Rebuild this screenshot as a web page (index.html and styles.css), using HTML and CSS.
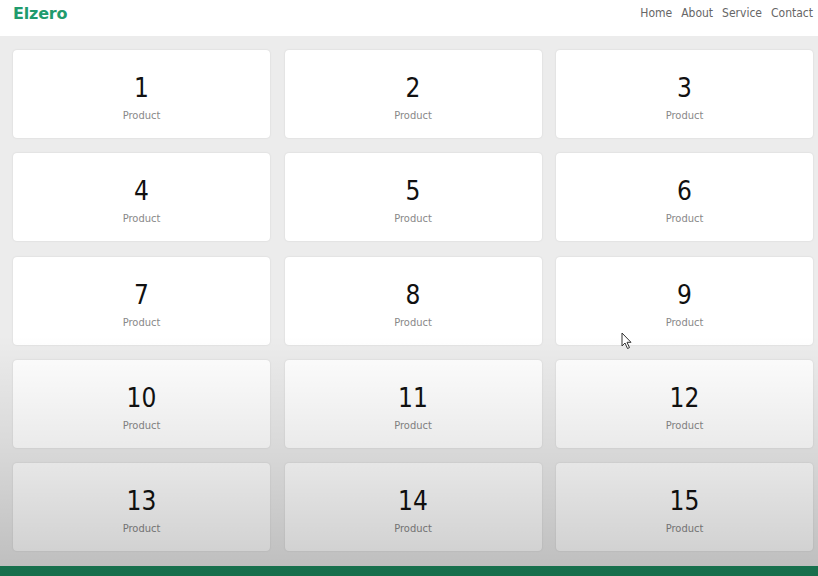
FILE: index.html
```html
<!DOCTYPE html>
<html lang="en">
<head>
<meta charset="utf-8">
<title>Elzero</title>
<link rel="stylesheet" href="styles.css">
</head>
<body>
<header class="header">
  <a class="logo" href="#">Elzero</a>
  <nav class="nav">
    <a href="#">Home</a>
    <a href="#">About</a>
    <a href="#">Service</a>
    <a href="#">Contact</a>
  </nav>
</header>
<main class="content">
  <div class="grid">
    <div class="card"><span class="num">1</span><span class="label">Product</span></div>
    <div class="card"><span class="num">2</span><span class="label">Product</span></div>
    <div class="card"><span class="num">3</span><span class="label">Product</span></div>
    <div class="card"><span class="num">4</span><span class="label">Product</span></div>
    <div class="card"><span class="num">5</span><span class="label">Product</span></div>
    <div class="card"><span class="num">6</span><span class="label">Product</span></div>
    <div class="card"><span class="num">7</span><span class="label">Product</span></div>
    <div class="card"><span class="num">8</span><span class="label">Product</span></div>
    <div class="card"><span class="num">9</span><span class="label">Product</span></div>
    <div class="card"><span class="num">10</span><span class="label">Product</span></div>
    <div class="card"><span class="num">11</span><span class="label">Product</span></div>
    <div class="card"><span class="num">12</span><span class="label">Product</span></div>
    <div class="card"><span class="num">13</span><span class="label">Product</span></div>
    <div class="card"><span class="num">14</span><span class="label">Product</span></div>
    <div class="card"><span class="num">15</span><span class="label">Product</span></div>
  </div>
</main>
<footer class="footer"></footer>
<div class="shade"></div>
<svg class="cursor" width="12" height="18" viewBox="0 0 12 18"><path d="M1 1 L1 14 L4 11 L6.5 16.5 L8.5 15.6 L6 10.3 L10 10.3 Z" fill="#fff" stroke="#333" stroke-width="1" stroke-linejoin="round"/></svg>
</body>
</html>
```
FILE: styles.css
```css
* { box-sizing: border-box; }
html, body { margin: 0; padding: 0; }
body {
  background: #ececec;
  font-family: "DejaVu Sans Condensed", "DejaVu Sans", sans-serif;
  height: 576px;
  overflow: hidden;
  position: relative;
}
.header {
  height: 36px;
  background: #fff;
  display: flex;
  align-items: flex-start;
  justify-content: space-between;
  padding: 3px 5px 0 13px;
}
.logo {
  color: #1f9b6d;
  font-family: "DejaVu Sans", sans-serif;
  font-weight: bold;
  font-size: 16px;
  text-decoration: none;
  letter-spacing: -0.2px;
  padding-top: 1px;
}
.nav {
  display: flex;
  gap: 9px;
  padding-top: 3px;
}
.nav a {
  color: #666;
  text-decoration: none;
  font-size: 12px;
}
.content {
  padding: 14px 5px 15px 13px;
}
.grid {
  display: grid;
  grid-template-columns: repeat(3, 1fr);
  column-gap: 14.5px;
  row-gap: 15.25px;
}
.card {
  background: #fff;
  height: 88px;
  border-radius: 4px;
  box-shadow: 0 0 2px rgba(0, 0, 0, 0.12);
  display: flex;
  flex-direction: column;
  align-items: center;
  justify-content: center;
  padding-top: 7px;
}
.num {
  font-family: "DejaVu Sans Condensed", "DejaVu Sans", sans-serif;
  font-size: 26px;
  color: #111;
  line-height: 30px;
}
.label {
  font-size: 11px;
  color: #888;
  margin-top: 6px;
}
.footer {
  height: 10px;
  background: #1d8a5f;
}
.shade {
  position: absolute;
  left: 0;
  right: 0;
  top: 335px;
  bottom: 0;
  background: linear-gradient(to bottom, rgba(0,0,0,0), rgba(0,0,0,0.08) 45%, rgba(0,0,0,0.2));
  pointer-events: none;
}
.cursor {
  position: absolute;
  left: 621px;
  top: 332px;
}
```
